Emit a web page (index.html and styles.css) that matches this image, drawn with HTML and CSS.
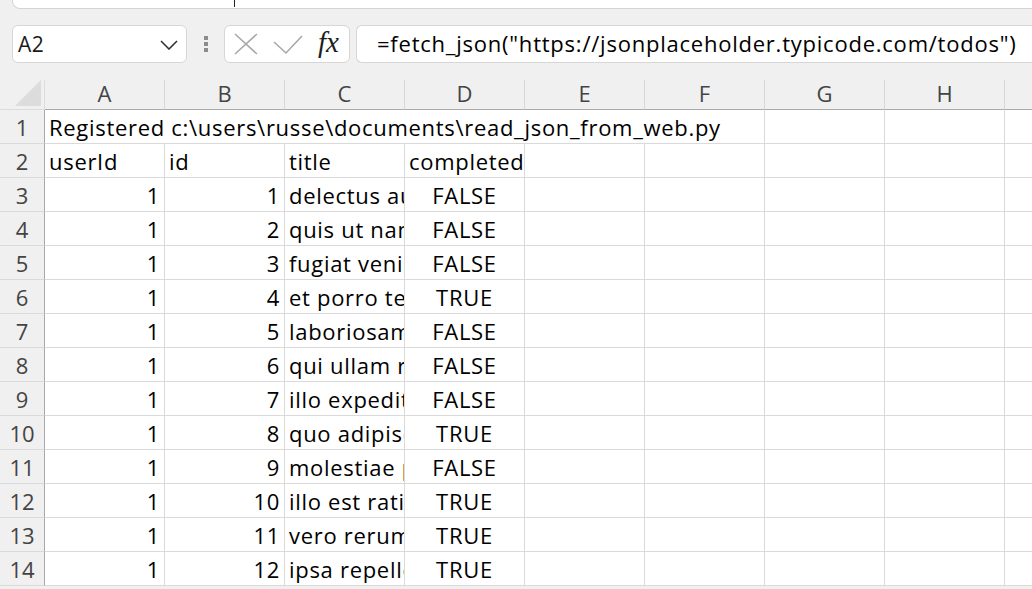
FILE: index.html
```html
<!DOCTYPE html>
<html>
<head>
<meta charset="utf-8">
<link rel="stylesheet" href="styles.css">
</head>
<body>
<div class="app">
  <div class="topbar"><span class="caret"></span></div>
  <div class="formula-row">
    <div class="namebox">
      <span class="name">A2</span>
      <svg class="chev" width="18" height="10" viewBox="0 0 18 10"><path d="M1 1 L9 9 L17 1" fill="none" stroke="#333" stroke-width="1.6"/></svg>
    </div>
    <div class="grip"><i></i><i></i><i></i></div>
    <div class="fbuttons">
      <svg width="24" height="22" viewBox="0 0 24 22"><path d="M1 1 L23 21 M23 1 L1 21" stroke="#a8a8a8" stroke-width="1.6" fill="none"/></svg>
      <svg width="30" height="20" viewBox="0 0 30 20"><path d="M1 7 L13 18 L29 1" stroke="#a8a8a8" stroke-width="1.6" fill="none"/></svg>
      <span class="fx">fx</span>
    </div>
    <div class="fbox">=fetch_json("https://jsonplaceholder.typicode.com/todos")</div>
  </div>

  <div class="sheet">
    <div class="corner"><span class="tri"></span></div>
    <div class="ch">A</div><div class="ch">B</div><div class="ch">C</div><div class="ch">D</div><div class="ch">E</div><div class="ch">F</div><div class="ch">G</div><div class="ch">H</div><div class="ch">I</div>

    <div class="rh">1</div>
    <div class="c span6">Registered c:\users\russe\documents\read_json_from_web.py</div>
    <div class="c"></div><div class="c"></div><div class="c"></div>

    <div class="rh">2</div>
    <div class="c">userId</div><div class="c">id</div><div class="c">title</div><div class="c">completed</div><div class="c"></div><div class="c"></div><div class="c"></div><div class="c"></div><div class="c"></div>

    <div class="rh">3</div>
    <div class="c r">1</div><div class="c r">1</div><div class="c">delectus aut autem</div><div class="c m">FALSE</div><div class="c"></div><div class="c"></div><div class="c"></div><div class="c"></div><div class="c"></div>

    <div class="rh">4</div>
    <div class="c r">1</div><div class="c r">2</div><div class="c">quis ut nam facilis</div><div class="c m">FALSE</div><div class="c"></div><div class="c"></div><div class="c"></div><div class="c"></div><div class="c"></div>

    <div class="rh">5</div>
    <div class="c r">1</div><div class="c r">3</div><div class="c">fugiat veniam minus</div><div class="c m">FALSE</div><div class="c"></div><div class="c"></div><div class="c"></div><div class="c"></div><div class="c"></div>

    <div class="rh">6</div>
    <div class="c r">1</div><div class="c r">4</div><div class="c">et porro tempora</div><div class="c m">TRUE</div><div class="c"></div><div class="c"></div><div class="c"></div><div class="c"></div><div class="c"></div>

    <div class="rh">7</div>
    <div class="c r">1</div><div class="c r">5</div><div class="c">laboriosam mollitia</div><div class="c m">FALSE</div><div class="c"></div><div class="c"></div><div class="c"></div><div class="c"></div><div class="c"></div>

    <div class="rh">8</div>
    <div class="c r">1</div><div class="c r">6</div><div class="c">qui ullam ratione</div><div class="c m">FALSE</div><div class="c"></div><div class="c"></div><div class="c"></div><div class="c"></div><div class="c"></div>

    <div class="rh">9</div>
    <div class="c r">1</div><div class="c r">7</div><div class="c">illo expedita consequatur</div><div class="c m">FALSE</div><div class="c"></div><div class="c"></div><div class="c"></div><div class="c"></div><div class="c"></div>

    <div class="rh">10</div>
    <div class="c r">1</div><div class="c r">8</div><div class="c">quo adipisci enim</div><div class="c m">TRUE</div><div class="c"></div><div class="c"></div><div class="c"></div><div class="c"></div><div class="c"></div>

    <div class="rh">11</div>
    <div class="c r">1</div><div class="c r">9</div><div class="c">molestiae perspiciatis</div><div class="c m">FALSE</div><div class="c"></div><div class="c"></div><div class="c"></div><div class="c"></div><div class="c"></div>

    <div class="rh">12</div>
    <div class="c r">1</div><div class="c r">10</div><div class="c">illo est ratione</div><div class="c m">TRUE</div><div class="c"></div><div class="c"></div><div class="c"></div><div class="c"></div><div class="c"></div>

    <div class="rh">13</div>
    <div class="c r">1</div><div class="c r">11</div><div class="c">vero rerum temporibus</div><div class="c m">TRUE</div><div class="c"></div><div class="c"></div><div class="c"></div><div class="c"></div><div class="c"></div>

    <div class="rh">14</div>
    <div class="c r">1</div><div class="c r">12</div><div class="c">ipsa repellendus fugit</div><div class="c m">TRUE</div><div class="c"></div><div class="c"></div><div class="c"></div><div class="c"></div><div class="c"></div>
  </div>
</div>
</body>
</html>
```

FILE: styles.css
```css
html, body {
  margin: 0;
  padding: 0;
  background: #f0f0f0;
  overflow: hidden;
  width: 1032px;
  height: 589px;
}

.app {
  font-family: "Open Sans", "Noto Sans", sans-serif;
  color: #000;
}

.topbar {
  margin-left: 12px;
  height: 8px;
  background: #fff;
  border: 1px solid #d4d4d4;
  border-top: none;
  border-right: none;
  border-bottom-left-radius: 8px;
  position: relative;
}

.caret {
  position: absolute;
  left: 221px;
  top: 0;
  width: 1px;
  height: 7px;
  background: #222;
}

.formula-row {
  display: flex;
  align-items: center;
  margin-top: 16px;
  height: 38px;
  padding-left: 12px;
}

.formula-row > * { flex: none; }

.namebox {
  box-sizing: border-box;
  width: 175px;
  height: 38px;
  background: #fff;
  border: 1px solid #d6d6d6;
  border-radius: 6px;
  display: flex;
  align-items: center;
  justify-content: space-between;
  padding: 0 8px 0 5px;
}

.name {
  font-size: 21px;
  color: #1a1a1a;
  line-height: 1;
  letter-spacing: 0.5px;
}

.chev { display: block; margin-top: 1px; }

.grip {
  width: 37px;
  display: flex;
  flex-direction: column;
  align-items: center;
  gap: 2px;
}

.grip i {
  display: block;
  width: 4px;
  height: 4px;
  background: #8c8c8c;
}

.fbuttons {
  box-sizing: border-box;
  width: 126px;
  height: 38px;
  background: #fff;
  border: 1px solid #d6d6d6;
  border-radius: 6px;
  display: flex;
  align-items: center;
  padding-left: 9px;
}

.fbuttons svg { display: block; flex: none; }
.fbuttons svg:nth-child(2) { margin-left: 15px; margin-top: 1px; }

.fx {
  font-family: "Liberation Serif", "DejaVu Serif", serif;
  font-style: italic;
  font-size: 29px;
  color: #1e1e1e;
  margin-left: 15px;
  line-height: 1;
  margin-top: -3px;
}

.fbox {
  box-sizing: border-box;
  margin-left: 6px;
  width: 700px;
  height: 38px;
  background: #fff;
  border: 1px solid #d6d6d6;
  border-right: none;
  border-radius: 6px 0 0 6px;
  font-size: 22px;
  letter-spacing: 0.77px;
  line-height: 35px;
  padding-left: 20px;
  white-space: nowrap;
  color: #000;
}

.sheet {
  margin-top: 17px;
  display: grid;
  grid-template-columns: 45px repeat(9, 120px);
  grid-template-rows: 30px;
  grid-auto-rows: 34px;
  font-size: 22px;
}

.corner {
  box-sizing: border-box;
  border-right: 1px solid #dcdcdc;
  border-bottom: 1px solid #dcdcdc;
  position: relative;
}

.tri {
  position: absolute;
  left: 15px;
  top: 0;
  width: 26px;
  height: 26px;
  background: #dcdcdc;
  clip-path: polygon(100% 0, 100% 100%, 0 100%);
}

.ch {
  box-sizing: border-box;
  border-right: 1px solid #d8d8d8;
  border-bottom: 1px solid #a9a9a9;
  text-align: center;
  line-height: 26px;
  color: #444;
}

.rh {
  box-sizing: border-box;
  border-right: 1px solid #a9a9a9;
  border-bottom: 1px solid #dadada;
  text-align: center;
  line-height: 34px;
  color: #444;
}

.c {
  box-sizing: border-box;
  background: #fff;
  border-right: 1px solid #dadada;
  border-bottom: 1px solid #dadada;
  padding: 0 4px;
  line-height: 34px;
  letter-spacing: 0.7px;
  white-space: nowrap;
  overflow: hidden;
}

.c.span6 { grid-column: span 6; }
.c.r { text-align: right; }
.c.m { text-align: center; }
```
